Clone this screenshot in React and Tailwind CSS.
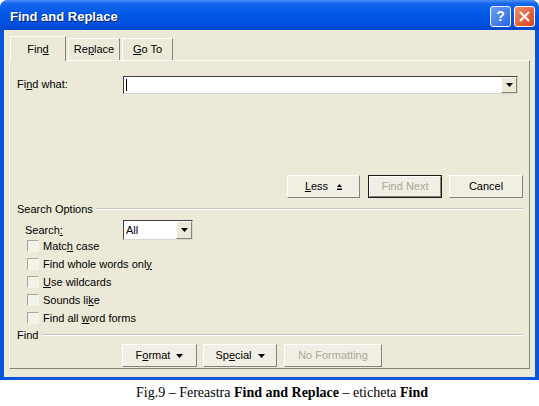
import React from 'react';

const U = ({ children }) => <span className="underline underline-offset-[1px]">{children}</span>;

const DownTri = () => (
    <svg width="7" height="4" viewBox="0 0 7 4" className="inline-block">
        <path d="M0 0h7L3.5 4z" fill="#000" />
    </svg>
);

const Btn = ({ children, w, disabled, isDefault }) => (
    <div
        className={`h-[23px] ${w} flex items-center justify-center ${isDefault ? 'border border-[#1b1b1b]' : ''}`}
    >
        <div
            className={`w-full h-full flex items-center justify-center border border-t-white border-l-white border-r-[#85847c] border-b-[#85847c] bg-[#f1efe4] ${
                disabled ? 'text-[#aca899]' : 'text-black'
            }`}
        >
            {children}
        </div>
    </div>
);

const Check = ({ children }) => (
    <div className="h-[18px] flex items-center pl-[10px] gap-[4px]">
        <div className="w-[12px] h-[12px] border border-t-[#a9a79c] border-l-[#a9a79c] border-r-[#f6f5ee] border-b-[#f6f5ee] bg-[#f4f3ea]" />
        <span>{children}</span>
    </div>
);

const Combo = ({ w, children }) => (
    <div className={`${w} h-[18px] flex border border-t-[#404040] border-l-[#404040] border-r-[#d8d6cb] border-b-[#d8d6cb] bg-white`}>
        <div className="flex-1 flex items-center pl-[2px]">{children}</div>
        <div className="w-[16px] h-full flex items-center justify-center border border-t-white border-l-white border-r-[#85847c] border-b-[#85847c] bg-[#ece9d8]">
            <DownTri />
        </div>
    </div>
);

const Group = ({ label }) => (
    <div className="h-[14px] flex items-center pl-[7px] pr-[6px] gap-[4px]">
        <span>{label}</span>
        <div className="flex-1 h-[2px] border-t border-t-[#c6c4b8] border-b border-b-white" />
    </div>
);

export default function App() {
    return (
        <div
            className="w-[539px] h-[406px] bg-white flex flex-col text-[11px] leading-none text-black"
            style={{ fontFamily: '"Liberation Sans", Arial, sans-serif' }}
        >
            {/* Window */}
            <div className="w-[539px] h-[380px] flex flex-col rounded-t-[8px] bg-[#0a55e0]">
                {/* Title bar */}
                <div className="h-[30px] flex items-center pl-[10px] pr-[4px] pt-[2px] rounded-t-[8px] bg-[linear-gradient(180deg,#4a90f8_0%,#1566ee_12%,#0058e6_45%,#0050de_80%,#0046cc_100%)]">
                    <span className="flex-1 text-white font-bold text-[13px] [text-shadow:1px_1px_0_#0a1f6e]">
                        Find and Replace
                    </span>
                    <div className="flex gap-[3px]">
                        <div className="w-[21px] h-[21px] rounded-[3px] border border-white flex items-center justify-center bg-[linear-gradient(135deg,#6ea0f6,#2b64e4)] text-white font-bold text-[14px]">
                            ?
                        </div>
                        <div className="w-[21px] h-[21px] rounded-[3px] border border-white flex items-center justify-center bg-[linear-gradient(135deg,#ef8f6e,#d8421b)]">
                            <svg width="11" height="11" viewBox="0 0 11 11">
                                <path d="M1.5 1.5l8 8M9.5 1.5l-8 8" stroke="#fff" strokeWidth="2" strokeLinecap="round" />
                            </svg>
                        </div>
                    </div>
                </div>

                {/* Body */}
                <div className="flex-1 mx-[4px] mb-[3px] bg-[#ece9d8] px-[5px] pt-[6px] flex flex-col">
                    {/* Tabs */}
                    <div className="h-[24px] flex items-end pl-[1px] gap-[2px]">
                        <div className="relative z-10 w-[56px] h-[25px] -mb-px flex items-center justify-center bg-[#ece9d8] border border-b-0 border-t-white border-l-white border-r-[#85847c]">
                            Fin<U>d</U>
                        </div>
                        <div className="w-[52px] h-[22px] flex items-center justify-center border border-b-0 border-t-white border-l-white border-r-[#85847c]">
                            Re<U>p</U>lace
                        </div>
                        <div className="w-[51px] h-[22px] flex items-center justify-center border border-b-0 border-t-white border-l-white border-r-[#85847c]">
                            <U>G</U>o To
                        </div>
                    </div>

                    {/* Panel */}
                    <div className="h-[309px] border border-t-white border-l-white border-r-[#85847c] border-b-[#85847c] flex flex-col">
                        <div className="mt-[15px] h-[17px] flex items-center pl-[7px]">
                            <span className="w-[106px]">
                                Fi<U>n</U>d what:
                            </span>
                            <Combo w="w-[395px]">
                                <div className="w-px h-[12px] bg-black" />
                            </Combo>
                        </div>

                        <div className="mt-[82px] flex justify-end pr-[6px]">
                            <Btn w="w-[73px]">
                                <U>L</U>ess
                                <svg width="5" height="6" viewBox="0 0 5 6" className="ml-[9px]">
                                    <path d="M2.5 0L5 3H0z M0 4.5h5V6H0z" fill="#000" />
                                </svg>
                            </Btn>
                            <div className="w-[8px]" />
                            <Btn w="w-[74px]" disabled isDefault>
                                Find Next
                            </Btn>
                            <div className="w-[7px]" />
                            <Btn w="w-[74px]">Cancel</Btn>
                        </div>

                        <div className="mt-[4px]">
                            <Group label="Search Options" />
                        </div>

                        <div className="mt-[4px] h-[20px] flex items-center pl-[15px]">
                            <span className="w-[98px]">
                                Search<U>:</U>
                            </span>
                            <Combo w="w-[70px] h-[20px]">All</Combo>
                        </div>

                        <div className="-mt-[3px] flex flex-col pl-[7px]">
                            <Check>
                                Matc<U>h</U> case
                            </Check>
                            <Check>
                                Find whole words onl<U>y</U>
                            </Check>
                            <Check>
                                <U>U</U>se wildcards
                            </Check>
                            <Check>
                                Sounds li<U>k</U>e
                            </Check>
                            <Check>
                                Find all <U>w</U>ord forms
                            </Check>
                        </div>

                        <div className="mt-[1px]">
                            <Group label="Find" />
                        </div>

                        <div className="mt-[2px] flex pl-[112px]">
                            <Btn w="w-[75px]">
                                F<U>o</U>rmat
                                <span className="ml-[6px]">
                                    <DownTri />
                                </span>
                            </Btn>
                            <div className="w-[6px]" />
                            <Btn w="w-[74px]">
                                Sp<U>e</U>cial
                                <span className="ml-[6px]">
                                    <DownTri />
                                </span>
                            </Btn>
                            <div className="w-[7px]" />
                            <Btn w="w-[98px]" disabled>
                                No Formatting
                            </Btn>
                        </div>
                    </div>
                </div>
            </div>

            {/* Caption */}
            <div
                className="flex-1 flex items-center justify-center pl-[25px] text-[14px]"
                style={{ fontFamily: '"Liberation Serif", "Times New Roman", serif' }}
            >
                <span>
                    Fig.9 – Fereastra <b>Find and Replace</b> – eticheta <b>Find</b>
                </span>
            </div>
        </div>
    );
}
